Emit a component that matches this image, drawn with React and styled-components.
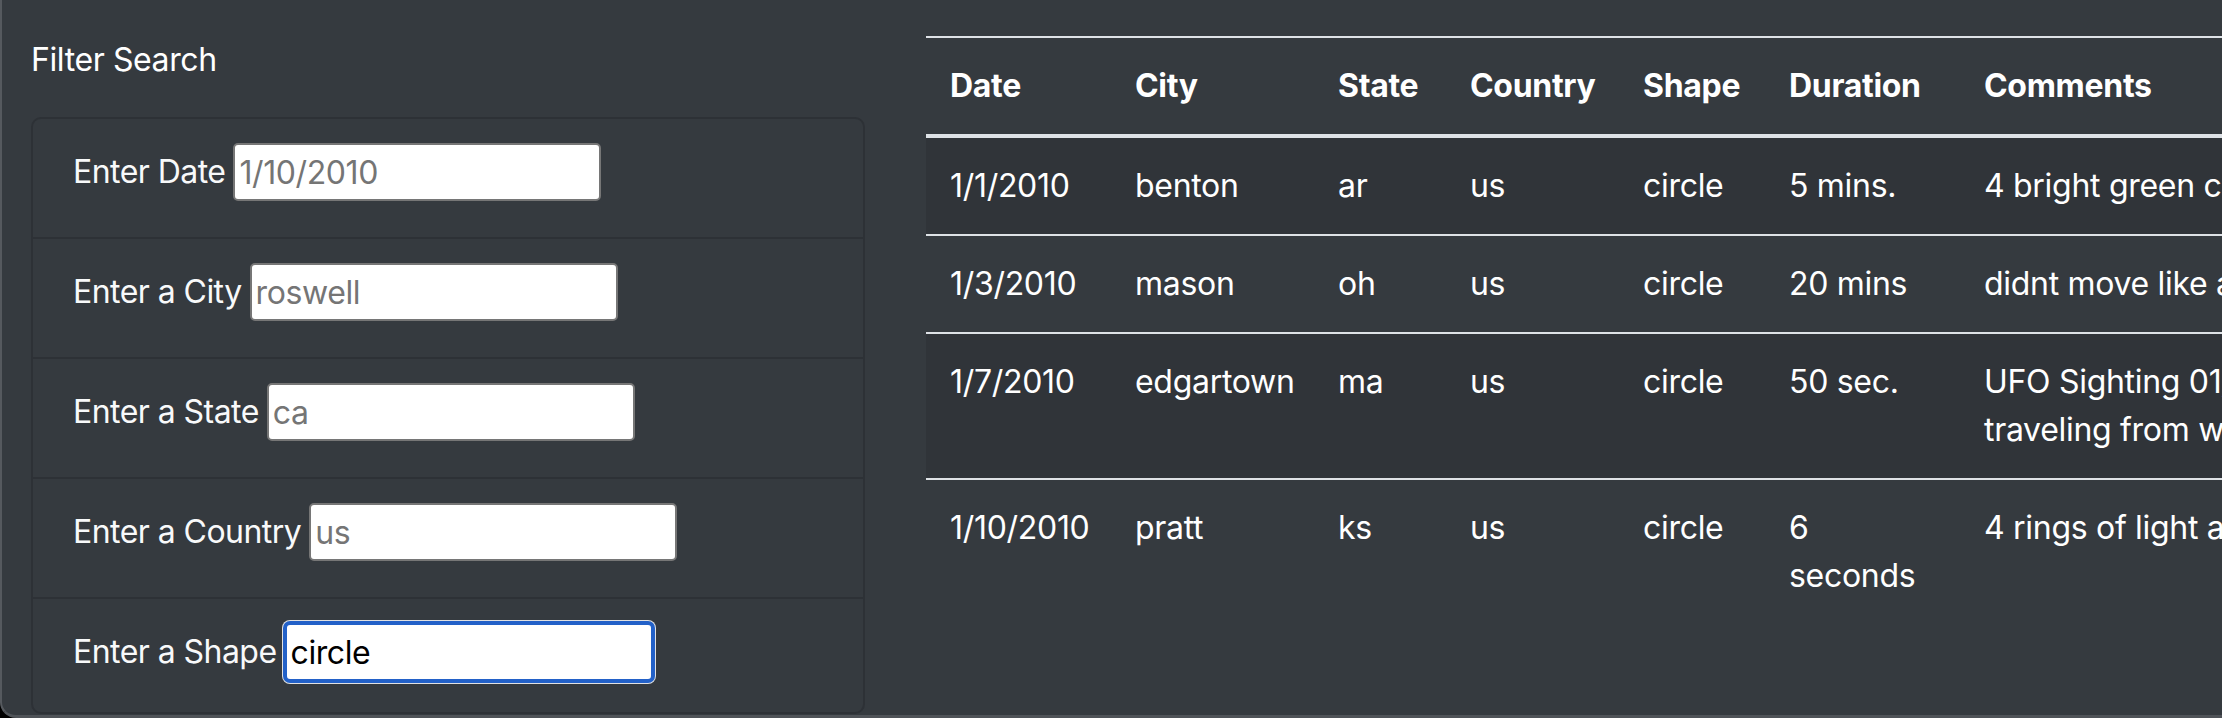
import React from 'react';
import styled, { createGlobalStyle } from 'styled-components';

const GlobalStyle = createGlobalStyle`
  html, body {
    margin: 0;
    padding: 0;
    background: #000;
  }
  body {
    font-family: Inter, "Noto Sans", "Liberation Sans", sans-serif;
    color: #fff;
  }
`;

const Window = styled.div`
  box-sizing: border-box;
  width: 2222px;
  height: 718px;
  background: #353a3f;
  border-left: 2px solid #55595e;
  border-bottom: 3px solid #4f5358;
  border-bottom-left-radius: 16px;
  overflow: hidden;
  display: flex;
  align-items: flex-start;
  gap: 61px;
  padding: 36px 0 0 29px;
`;

const FilterColumn = styled.div`
  flex: none;
  width: 834px;
`;

const Title = styled.div`
  font-size: 32px;
  line-height: 48px;
  height: 48px;
  margin-bottom: 33px;
  letter-spacing: -0.4px;
`;

const FilterList = styled.ul`
  list-style: none;
  margin: 0;
  padding: 0;
  border: 2px solid #2d3136;
  border-radius: 10px;
`;

const FilterItem = styled.li`
  display: flex;
  align-items: center;
  gap: 8px;
  padding: 24px 40px 36px;
  border-top: 2px solid #2d3136;
  &:first-child { border-top: none; }
  &:last-child { padding-bottom: 31px; }
`;

const Label = styled.label`
  font-size: 32px;
  line-height: 48px;
  letter-spacing: -0.55px;
  color: #f8f9fa;
  white-space: nowrap;
`;

const Input = styled.input`
  box-sizing: border-box;
  width: 368px;
  height: 58px;
  padding: 2px 4px;
  font-family: inherit;
  font-size: 32px;
  letter-spacing: -0.4px;
  color: #000;
  background: #fff;
  border: 2px solid ${(p) => (p.$focused ? '#2361c8' : '#767676')};
  border-radius: 5px;
  box-shadow: ${(p) =>
    p.$focused ? '0 0 0 2px #2361c8, 0 0 0 3px rgba(255,255,255,0.85)' : 'none'};
  outline: none;
  caret-color: #000;
  &::placeholder { color: #757575; }
`;

const TableWrap = styled.div`
  flex: 1;
  min-width: 0;
  overflow: hidden;
`;

const Table = styled.table`
  table-layout: fixed;
  width: ${(p) => p.$width}px;
  border-collapse: separate;
  border-spacing: 0;
  font-size: 32px;
  line-height: 48px;
  letter-spacing: -0.3px;
  color: #fff;
`;

const Th = styled.th`
  text-align: left;
  font-weight: 700;
  padding: 24px;
  vertical-align: bottom;
  border-top: 2px solid #dee2e6;
  border-bottom: 4px solid #dee2e6;
`;

const Row = styled.tr`
  background: ${(p) => (p.$odd ? '#303439' : 'transparent')};
`;

const Td = styled.td`
  padding: 24px;
  vertical-align: top;
  border-top: ${(p) => (p.$first ? 'none' : '2px solid #dee2e6')};
`;

const filters = [
  { id: 'datetime', label: 'Enter Date', placeholder: '1/10/2010' },
  { id: 'city', label: 'Enter a City', placeholder: 'roswell' },
  { id: 'state', label: 'Enter a State', placeholder: 'ca' },
  { id: 'country', label: 'Enter a Country', placeholder: 'us' },
  { id: 'shape', label: 'Enter a Shape', placeholder: 'circle', value: 'circle' },
];

const columns = [
  { title: 'Date', width: 185 },
  { title: 'City', width: 203 },
  { title: 'State', width: 132 },
  { title: 'Country', width: 173 },
  { title: 'Shape', width: 146 },
  { title: 'Duration', width: 195 },
  { title: 'Comments', width: 2200 },
];

const tableWidth = columns.reduce((sum, c) => sum + c.width, 0);

const sightings = [
  ['1/1/2010', 'benton', 'ar', 'us', 'circle', '5 mins.', '4 bright green circles high in the sky going in circles then one bright green light at my front door.'],
  ['1/3/2010', 'mason', 'oh', 'us', 'circle', '20 mins', 'didnt move like a plane, stayed in one spot and then slowly faded away.'],
  ['1/7/2010', 'edgartown', 'ma', 'us', 'circle', '50 sec.', (
    <>UFO Sighting 01/07/10 Edgartown, MA; bright orange circular light, no sound, moving slowly<br />traveling from west to east over the harbor before disappearing.</>
  )],
  ['1/10/2010', 'pratt', 'ks', 'us', 'circle', '6 seconds', '4 rings of light appeared in the sky and moved in a circle formation.'],
];

export default function App() {
  return (
    <>
      <GlobalStyle />
      <Window>
        <FilterColumn>
          <Title>Filter Search</Title>
          <FilterList>
            {filters.map((f) => (
              <FilterItem key={f.id}>
                <Label htmlFor={f.id}>{f.label}</Label>
                {f.value ? (
                  <Input id={f.id} type="text" defaultValue={f.value} $focused autoFocus />
                ) : (
                  <Input id={f.id} type="text" placeholder={f.placeholder} />
                )}
              </FilterItem>
            ))}
          </FilterList>
        </FilterColumn>
        <TableWrap>
          <Table $width={tableWidth}>
            <colgroup>
              {columns.map((c) => (
                <col key={c.title} style={{ width: c.width }} />
              ))}
            </colgroup>
            <thead>
              <tr>
                {columns.map((c) => (
                  <Th key={c.title}>{c.title}</Th>
                ))}
              </tr>
            </thead>
            <tbody>
              {sightings.map((row, i) => (
                <Row key={i} $odd={i % 2 === 0}>
                  {row.map((cell, j) => (
                    <Td key={j} $first={i === 0}>{cell}</Td>
                  ))}
                </Row>
              ))}
            </tbody>
          </Table>
        </TableWrap>
      </Window>
    </>
  );
}
